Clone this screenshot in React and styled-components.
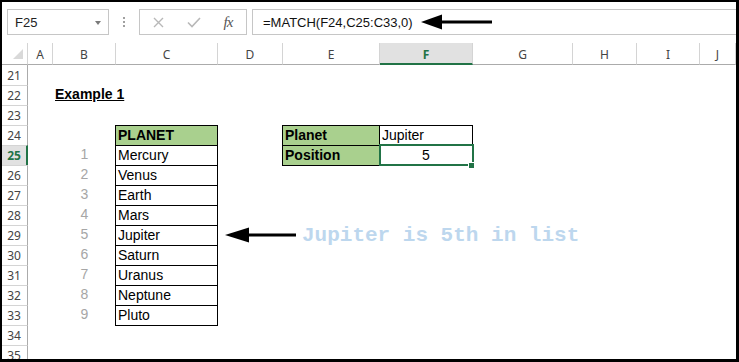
import React from "react";
import styled, { createGlobalStyle } from "styled-components";

const GlobalStyle = createGlobalStyle`
  html, body {
    margin: 0;
    padding: 0;
    background: #ffffff;
  }
  body {
    font-family: "Liberation Sans", Arial, sans-serif;
  }
`;

const GREEN = "#217346";
const FILL = "#a9d08e";

const Frame = styled.div`
  width: 739px;
  height: 362px;
  box-sizing: border-box;
  border: 2px solid #000;
  border-right-width: 3px;
  border-bottom-width: 3px;
  background: #fff;
  overflow: hidden;
  display: flex;
  flex-direction: column;
`;

const FormulaBar = styled.div`
  height: 41px;
  flex: none;
  box-sizing: border-box;
  padding: 7px 0 0 5px;
  display: flex;
  align-items: flex-start;
`;

const NameBox = styled.div`
  width: 102px;
  height: 26px;
  box-sizing: border-box;
  border: 1px solid #c6c6c6;
  display: flex;
  align-items: center;
  justify-content: space-between;
  padding: 0 7px 0 7px;
  font-size: 13px;
  color: #222;
`;

const Caret = styled.span`
  width: 0;
  height: 0;
  border-left: 3px solid transparent;
  border-right: 3px solid transparent;
  border-top: 4px solid #7a7a7a;
  margin-top: 1px;
`;

const Grip = styled.div`
  width: 30px;
  height: 26px;
  display: flex;
  flex-direction: column;
  align-items: center;
  justify-content: center;
  gap: 2px;
  span {
    width: 2px;
    height: 2px;
    background: #a0a0a0;
  }
`;

const FxBox = styled.div`
  width: 108px;
  height: 26px;
  box-sizing: border-box;
  border: 1px solid #c6c6c6;
  display: grid;
  grid-template-columns: 36px 36px 36px;
  align-items: center;
  justify-items: center;
`;

const Fx = styled.span`
  font-family: "Liberation Serif", "Times New Roman", serif;
  font-style: italic;
  font-size: 15px;
  color: #555;
  letter-spacing: -1px;
  margin-left: -4px;
`;

const FormulaInput = styled.div`
  flex: 1;
  margin-left: 5px;
  height: 26px;
  box-sizing: border-box;
  border: 1px solid #c6c6c6;
  border-right: none;
  display: flex;
  align-items: center;
  padding-left: 10px;
  font-size: 13px;
  color: #111;
  gap: 8px;
`;

const Sheet = styled.div`
  flex: 1;
  display: grid;
  grid-template-columns: 26px 25px 63px 102px 65px 97px 93px 100px 64px 63px 1fr;
  grid-template-rows: 22px;
  grid-auto-rows: 20px;
`;

const Corner = styled.div`
  box-sizing: border-box;
  border-right: 1px solid #d4d4d4;
  border-bottom: 1px solid #ababab;
  display: flex;
  align-items: flex-end;
  justify-content: flex-end;
  padding: 0 4px 5px 0;
`;

const ColHead = styled.div`
  box-sizing: border-box;
  border-right: 1px solid #d4d4d4;
  border-bottom: ${(p) => (p.$active ? `2px solid ${GREEN}` : "1px solid #ababab")};
  background: ${(p) => (p.$active ? "#e1e1e1" : "#fff")};
  color: ${(p) => (p.$active ? GREEN : "#444")};
  font-weight: ${(p) => (p.$active ? 700 : 400)};
  font-family: "Noto Sans", "Open Sans", sans-serif;
  font-size: 12px;
  display: flex;
  align-items: center;
  justify-content: center;
  padding-top: 2px;
`;

const RowHead = styled.div`
  box-sizing: border-box;
  border-right: ${(p) => (p.$active ? `2px solid ${GREEN}` : "1px solid #ababab")};
  border-top: ${(p) => (p.$first ? "none" : "1px solid #d4d4d4")};
  background: ${(p) => (p.$active ? "#e1e1e1" : "#fff")};
  color: ${(p) => (p.$active ? GREEN : "#444")};
  font-weight: ${(p) => (p.$active ? 700 : 400)};
  font-family: "Noto Sans", "Open Sans", sans-serif;
  font-size: 12px;
  display: flex;
  align-items: center;
  justify-content: center;
  padding-right: ${(p) => (p.$active ? "0" : "1px")};
`;

const Cell = styled.div`
  box-sizing: border-box;
  position: relative;
  grid-column: ${(p) => (p.$span ? `span ${p.$span}` : "auto")};
  white-space: nowrap;
  overflow: visible;
  font-size: 14px;
  line-height: 19px;
  color: ${(p) => (p.$muted ? "#a6a6a6" : "#000")};
  font-weight: ${(p) => (p.$bold ? 700 : 400)};
  text-decoration: ${(p) => (p.$underline ? "underline" : "none")};
  text-align: ${(p) => p.$align || "left"};
  padding: ${(p) => (p.$box ? "0 2px" : "0 2px")};
  background: ${(p) => (p.$fill ? FILL : "transparent")};
  border-top: ${(p) => (p.$box ? "1px solid #000" : "none")};
  border-right: ${(p) => (p.$box ? "1px solid #000" : "none")};
  box-shadow: ${(p) =>
    p.$box ? "-1px 0 0 #000, 0 1px 0 #000, -1px 1px 0 #000" : "none"};
  ${(p) =>
    p.$selected &&
    `
    z-index: 2;
    outline: 2px solid ${GREEN};
    outline-offset: -1px;
    &::after {
      content: "";
      position: absolute;
      right: -3px;
      bottom: -4px;
      width: 5px;
      height: 5px;
      background: ${GREEN};
      border: 1px solid #fff;
    }
  `}
`;

const Note = styled.div`
  display: flex;
  align-items: center;
  height: 100%;
  padding-left: 5px;
  gap: 6px;
`;

const NoteText = styled.span`
  font-family: "Liberation Mono", "Courier New", monospace;
  font-weight: 700;
  font-size: 21px;
  color: #bdd7ee;
  margin-top: 1px;
`;

const LeftArrow = ({ width = 72, head = 22 }) => (
  <svg width={width} height="16" viewBox={`0 0 ${width} 16`}>
    <polygon points={`0,8 ${head},0.5 ${head},15.5`} fill="#000" />
    <rect x={head - 2} y="6.5" width={width - head + 2} height="3" fill="#000" />
  </svg>
);

const CrossIcon = () => (
  <svg width="11" height="11" viewBox="0 0 11 11">
    <path d="M1 1 L10 10 M10 1 L1 10" stroke="#b8b8b8" strokeWidth="1.4" />
  </svg>
);

const CheckIcon = () => (
  <svg width="14" height="11" viewBox="0 0 14 11">
    <path d="M1 5.5 L5 9.5 L13 1" stroke="#b8b8b8" strokeWidth="1.6" fill="none" />
  </svg>
);

const CornerMark = () => (
  <svg width="10" height="10" viewBox="0 0 10 10">
    <polygon points="10,0 10,10 0,10" fill="#d9d9d9" />
  </svg>
);

const COLS = ["A", "B", "C", "D", "E", "F", "G", "H", "I", "J"];
const PLANETS = [
  "Mercury",
  "Venus",
  "Earth",
  "Mars",
  "Jupiter",
  "Saturn",
  "Uranus",
  "Neptune",
  "Pluto",
];

// cell contents keyed by row, then column
const buildRows = () => {
  const rows = {};
  for (let r = 21; r <= 35; r++) rows[r] = {};
  rows[22].B = { text: "Example 1", $bold: true, $underline: true };
  rows[24].C = { text: "PLANET", $bold: true, $fill: true, $box: true };
  rows[24].E = { text: "Planet", $bold: true, $fill: true, $box: true };
  rows[24].F = { text: "Jupiter", $box: true };
  rows[25].E = { text: "Position", $bold: true, $fill: true, $box: true };
  rows[25].F = { text: "5", $box: true, $align: "center", $selected: true };
  PLANETS.forEach((name, i) => {
    rows[25 + i].B = { text: String(i + 1), $muted: true, $align: "center" };
    rows[25 + i].C = { text: name, $box: true };
  });
  rows[29].D = { note: true, $span: 5 };
  return rows;
};

const rows = buildRows();

const App = () => {
  return (
    <>
      <GlobalStyle />
      <Frame>
        <FormulaBar>
          <NameBox>
            F25
            <Caret />
          </NameBox>
          <Grip>
            <span />
            <span />
            <span />
          </Grip>
          <FxBox>
            <CrossIcon />
            <CheckIcon />
            <Fx>fx</Fx>
          </FxBox>
          <FormulaInput>
            =MATCH(F24,C25:C33,0)
            <LeftArrow width={71} head={21} />
          </FormulaInput>
        </FormulaBar>
        <Sheet>
          <Corner>
            <CornerMark />
          </Corner>
          {COLS.map((c) => (
            <ColHead key={c} $active={c === "F"}>
              {c}
            </ColHead>
          ))}
          {Object.keys(rows).map((r) => {
            const row = rows[r];
            const out = [
              <RowHead key={`h${r}`} $active={r === "25"} $first={r === "21"}>
                {r}
              </RowHead>,
            ];
            let skip = 0;
            COLS.forEach((c) => {
              if (skip > 0) {
                skip--;
                return;
              }
              const cell = row[c];
              if (!cell) {
                out.push(<Cell key={`${c}${r}`} />);
                return;
              }
              const { text, note, ...style } = cell;
              if (style.$span) skip = style.$span - 1;
              out.push(
                <Cell key={`${c}${r}`} {...style}>
                  {note ? (
                    <Note>
                      <LeftArrow width={71} head={24} />
                      <NoteText>Jupiter is 5th in list</NoteText>
                    </Note>
                  ) : (
                    text
                  )}
                </Cell>
              );
            });
            return out;
          })}
        </Sheet>
      </Frame>
    </>
  );
};

export default App;
